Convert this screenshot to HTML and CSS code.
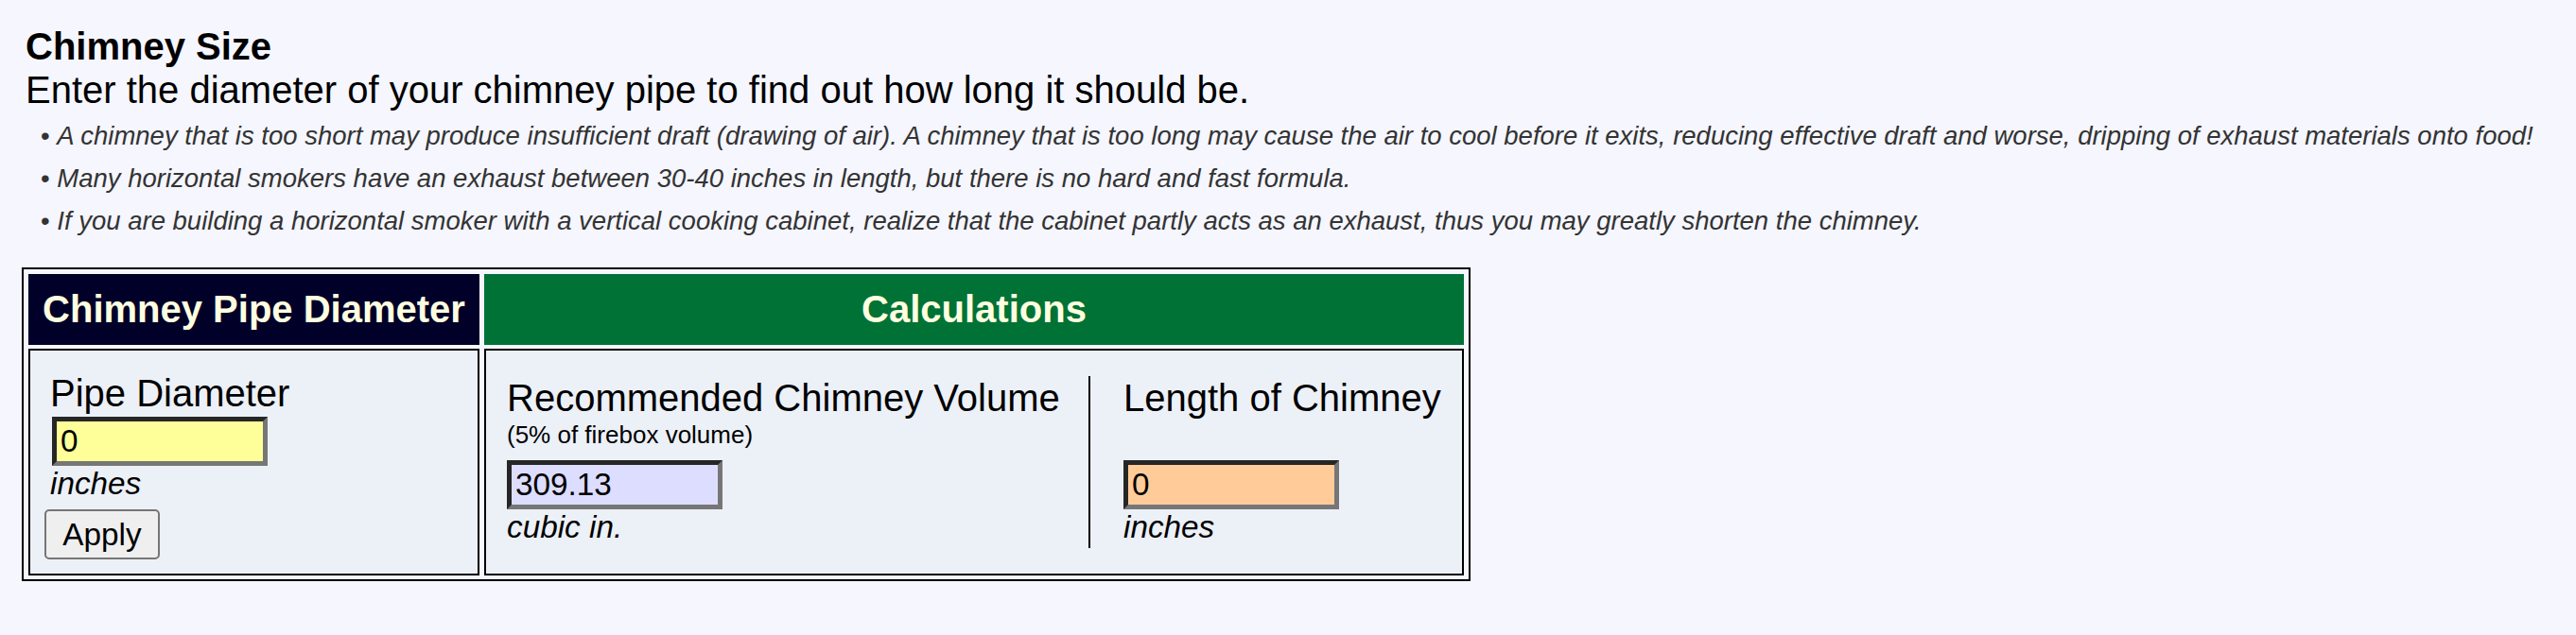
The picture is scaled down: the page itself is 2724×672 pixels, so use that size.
FILE: index.html
```html
<!DOCTYPE html>
<html lang="en">
<head>
<meta charset="utf-8">
<title>Chimney Size</title>
<link rel="stylesheet" href="styles.css">
</head>
<body>
<div class="page">
  <div class="title">Chimney Size</div>
  <div class="subtitle">Enter the diameter of your chimney pipe to find out how long it should be.</div>
  <ul class="notes">
    <li>A chimney that is too short may produce insufficient draft (drawing of air). A chimney that is too long may cause the air to cool before it exits, reducing effective draft and worse, dripping of exhaust materials onto food!</li>
    <li>Many horizontal smokers have an exhaust between 30-40 inches in length, but there is no hard and fast formula.</li>
    <li>If you are building a horizontal smoker with a vertical cooking cabinet, realize that the cabinet partly acts as an exhaust, thus you may greatly shorten the chimney.</li>
  </ul>
  <div class="calc">
    <div class="head head-pipe">Chimney Pipe Diameter</div>
    <div class="head head-calc">Calculations</div>
    <div class="cell cell-pipe">
      <div class="label">Pipe Diameter</div>
      <input class="field field-pipe" type="text" value="0">
      <div class="unit">inches</div>
      <button class="apply" type="button">Apply</button>
    </div>
    <div class="cell cell-calc">
      <div class="col col-volume">
        <div class="label">Recommended Chimney Volume</div>
        <div class="note">(5% of firebox volume)</div>
        <input class="field field-volume" type="text" value="309.13">
        <div class="unit">cubic in.</div>
      </div>
      <div class="col col-length">
        <div class="label">Length of Chimney</div>
        <input class="field field-length" type="text" value="0">
        <div class="unit">inches</div>
      </div>
    </div>
  </div>
</div>
</body>
</html>
```
FILE: styles.css
```css
html, body {
  margin: 0;
  padding: 0;
  background: #f5f6fe;
  font-family: "Liberation Sans", Arial, sans-serif;
  color: #000;
}

.page {
  padding: 26px 0 0 23px;
}

.title {
  margin-left: 4px;
  font-size: 40px;
  font-weight: bold;
  line-height: 46px;
}

.subtitle {
  margin-left: 4px;
  font-size: 40px;
  line-height: 46px;
}

.notes {
  margin: 3px 0 0;
  padding: 0 0 0 20px;
  list-style: none;
  font-style: italic;
  font-size: 27.5px;
  line-height: 45px;
  color: #333;
  white-space: nowrap;
}

.notes li::before {
  content: "\2022\00a0";
  font-style: normal;
}

.calc {
  display: grid;
  width: max-content;
  grid-template-columns: 477px 1036px;
  grid-template-rows: 75px 240px;
  column-gap: 5px;
  row-gap: 4px;
  margin-top: 27px;
  padding: 5px 5px 4px 5px;
  border: 2px solid #000;
}

.head {
  display: flex;
  align-items: center;
  justify-content: center;
  font-size: 40px;
  font-weight: bold;
  color: #ffffe0;
}

.head-pipe {
  background: #000028;
}

.head-calc {
  background: #007236;
}

.cell {
  box-sizing: border-box;
  border: 2px solid #000;
  background: #ecf0f7;
}

.label {
  font-size: 40px;
  line-height: 46px;
  white-space: nowrap;
}

.note {
  font-size: 26px;
  line-height: 32px;
}

.unit {
  font-style: italic;
  font-size: 33.3px;
  line-height: 38px;
}

.field {
  display: block;
  box-sizing: border-box;
  width: 228px;
  height: 52px;
  margin: 0;
  padding: 0 4px;
  border-style: solid;
  border-width: 5px;
  border-color: #262626 #767676 #767676 #262626;
  font-family: inherit;
  font-size: 33.3px;
  color: #000;
  outline: none;
}

.cell-pipe {
  padding: 22px 0 0 21px;
}

.field-pipe {
  margin: 2px 0 0 2px;
  background: #ffff99;
}

.apply {
  display: block;
  box-sizing: border-box;
  width: 122px;
  height: 53px;
  margin: 8px 0 0 -6px;
  padding: 0;
  border: 2.5px solid #767676;
  border-radius: 5px;
  background: #efefef;
  font-family: inherit;
  font-size: 33.3px;
  color: #000;
}

.cell-calc {
  display: flex;
  align-items: flex-start;
  padding: 27px 0 0 22px;
}

.col-volume {
  width: 615px;
  height: 182px;
  border-right: 2px solid #000;
}

.field-volume {
  margin-top: 11px;
  background: #ddddff;
}

.col-length {
  padding-left: 35px;
}

.field-length {
  margin-top: 43px;
  background: #ffcc99;
}
```
